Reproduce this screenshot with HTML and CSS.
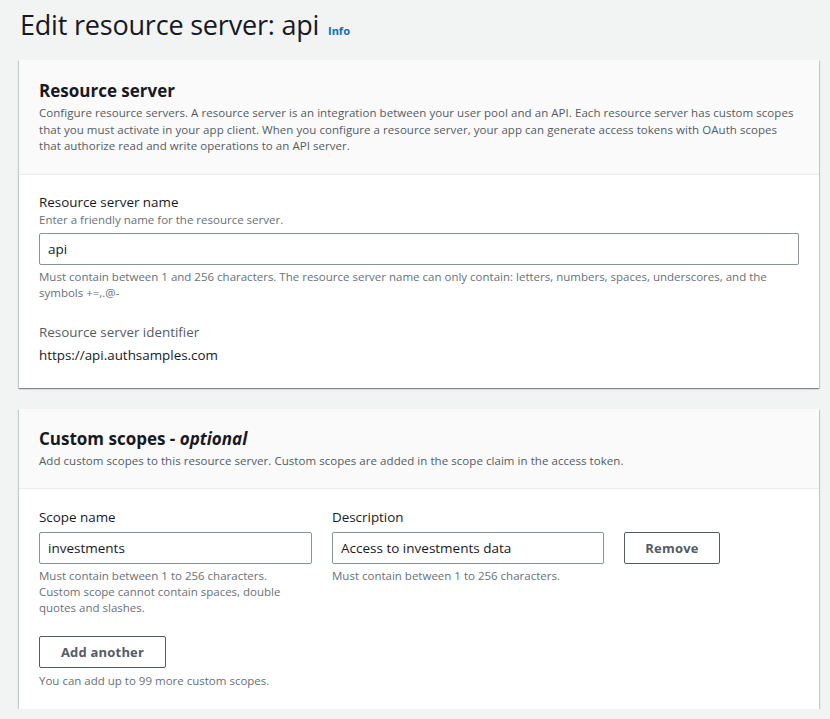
FILE: index.html
```html
<!DOCTYPE html>
<html>
<head>
<meta charset="utf-8">
<link rel="stylesheet" href="styles.css">
</head>
<body>
<div class="page">
  <h1 class="title">Edit resource server: api <a class="info" href="#">Info</a></h1>

  <section class="card card-one">
    <header class="card-head">
      <h2 class="card-title">Resource server</h2>
      <p class="card-desc">Configure resource servers. A resource server is an integration between your user pool and an API. Each resource server has custom scopes that you must activate in your app client. When you configure a resource server, your app can generate access tokens with OAuth scopes that authorize read and write operations to an API server.</p>
    </header>
    <div class="card-body">
      <div class="field">
        <div class="label">Resource server name</div>
        <div class="hint">Enter a friendly name for the resource server.</div>
        <div class="input wide">api</div>
        <div class="constraint">Must contain between 1 and 256 characters. The resource server name can only contain: letters, numbers, spaces, underscores, and the symbols +=,.@-</div>
      </div>
      <div class="field field-id">
        <div class="label">Resource server identifier</div>
        <div class="value">https://api.authsamples.com</div>
      </div>
    </div>
  </section>

  <section class="card card-two">
    <header class="card-head">
      <h2 class="card-title">Custom scopes - <i>optional</i></h2>
      <p class="card-desc">Add custom scopes to this resource server. Custom scopes are added in the scope claim in the access token.</p>
    </header>
    <div class="card-body body-two">
      <div class="scope-row">
        <div class="col col-name">
          <div class="label">Scope name</div>
          <div class="input">investments</div>
          <div class="constraint narrow">Must contain between 1 to 256 characters. Custom scope cannot contain spaces, double quotes and slashes.</div>
        </div>
        <div class="col col-desc">
          <div class="label">Description</div>
          <div class="input">Access to investments data</div>
          <div class="constraint">Must contain between 1 to 256 characters.</div>
        </div>
        <div class="col col-btn">
          <button class="btn btn-remove">Remove</button>
        </div>
      </div>
      <button class="btn btn-add">Add another</button>
      <div class="constraint">You can add up to 99 more custom scopes.</div>
    </div>
  </section>
</div>
</body>
</html>
```

FILE: styles.css
```css
html, body {
  margin: 0;
  padding: 0;
  background: #f2f3f3;
}
body {
  font-family: "Open Sans", "Noto Sans", sans-serif;
  color: #16191f;
}
.page {
  padding: 2px 11px 0 19px;
}
.title {
  margin: 0 0 0 1px;
  font-size: 27px;
  font-weight: 400;
  line-height: 46px;
  letter-spacing: -0.2px;
}
.info {
  font-size: 11px;
  line-height: 1;
  font-weight: 700;
  color: #0073bb;
  text-decoration: none;
  letter-spacing: 0;
  margin-left: 2px;
}
.card {
  background: #fff;
  box-shadow: 0 1px 1px 0 rgba(0,28,36,0.3), 1px 1px 1px 0 rgba(0,28,36,0.15), -1px 1px 1px 0 rgba(0,28,36,0.15);
  width: 800px;
}
.card-one {
  margin-top: 12px;
}
.card-two {
  margin-top: 21px;
}
.card-head {
  background: #fafafa;
  border-bottom: 1px solid #eaeded;
  padding: 19px 20px 19px 20px;
}
.card-two .card-head {
  padding-top: 18px;
}
.card-title {
  margin: 0;
  font-size: 17px;
  font-weight: 700;
  line-height: 24px;
}
.card-title i {
  font-weight: 700;
}
.card-desc {
  margin: 2px 0 0 0;
  font-size: 11.5px;
  line-height: 16.5px;
  color: #545b64;
  letter-spacing: 0.05px;
}
.card-body {
  padding: 18px 20px 23px 20px;
}
.label {
  font-size: 13.4px;
  line-height: 18px;
  color: #16191f;
}
.hint {
  font-size: 11.5px;
  line-height: 18px;
  color: #687078;
}
.input {
  box-sizing: border-box;
  height: 32px;
  border: 1px solid #879596;
  border-radius: 2px;
  padding: 0 8px;
  font-size: 13.5px;
  line-height: 30px;
  margin-top: 4px;
}
.wide {
  width: 760px;
}
.constraint {
  font-size: 11.5px;
  line-height: 16px;
  color: #687078;
  margin-top: 4px;
  letter-spacing: 0;
}
.narrow {
  max-width: 262px;
}
.field-id {
  margin-top: 22px;
}
.field-id .label {
  color: #545b64;
}
.value {
  font-size: 13.4px;
  line-height: 20px;
  margin-top: 4px;
}
.body-two {
  padding-top: 19px;
  padding-bottom: 20px;
}
.body-two .input {
  margin-top: 6px;
}
.scope-row {
  display: flex;
  gap: 20px;
}
.col-name { width: 273px; }
.col-desc { width: 272px; }
.col-btn {
  padding-top: 24px;
}
.btn {
  box-sizing: border-box;
  background: #fff;
  border: 1px solid #545b64;
  border-radius: 2px;
  font-family: inherit;
  font-size: 13px;
  font-weight: 700;
  color: #545b64;
  height: 32px;
  padding: 0 20px;
  letter-spacing: 0.2px;
}
.btn-remove {
  width: 96px;
}
.btn-add {
  width: 127px;
  margin-top: 20px;
  display: block;
}
.btn-add + .constraint {
  margin-top: 5px;
}
```
